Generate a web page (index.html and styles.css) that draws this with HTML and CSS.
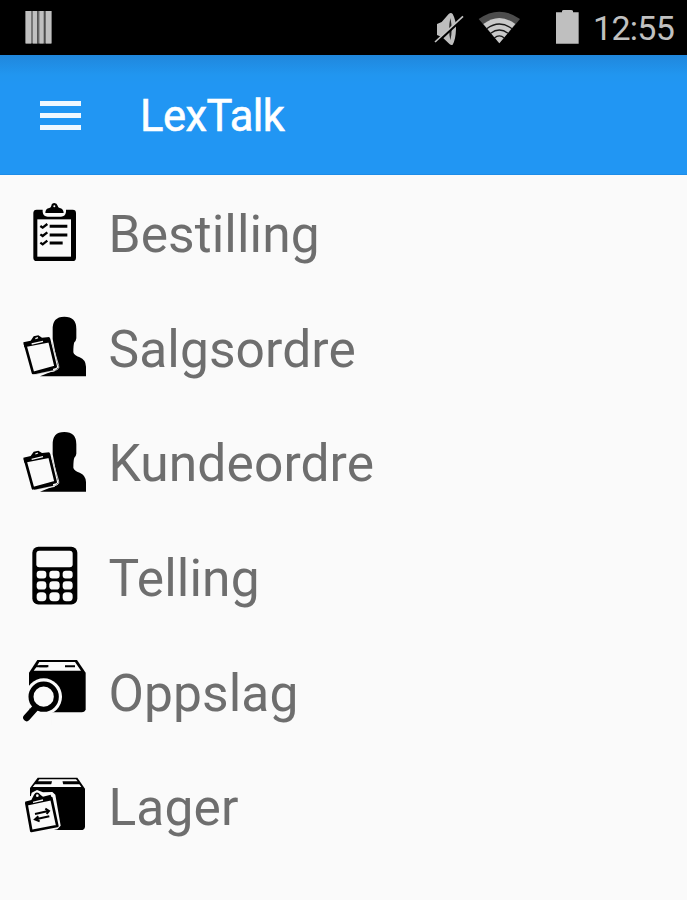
FILE: index.html
```html
<!DOCTYPE html>
<html lang="no">
<head>
<meta charset="utf-8">
<title>LexTalk</title>
<link rel="stylesheet" href="styles.css">
</head>
<body>
<div class="statusbar">
  <svg class="bars" viewBox="0 0 28 34"><rect x="0" y="0" width="27" height="32.500" fill="#777"/><path d="M1 0h5v32.500H1zM8 0h4v32.500H8zM14.500 0h4v32.500h-4zM21 0h5v32.500h-5z" fill="#c0c0c0"/><path d="M12.800 0v32M19.700 0v32" stroke="#444"/></svg>
  <div class="status-right">
    <svg class="tray" viewBox="0 0 525 180">
      <path d="M51 72L65 66 86 42Q93 36 98 42Q109 62 108 87Q107 119 98 134Q92 137 86 130L67 112 51 105Z" fill="#bebebe"/>
      <path d="M91 54Q84 88 91 121Q99 88 91 54Z" fill="#222"/>
      <path d="M48 130L132 52" stroke="#000" stroke-width="8"/>
      <path d="M45 126L129 49" stroke="#c4c4c4" stroke-width="5"/>
      <path d="M176 57Q238 13 300 57L238 130Z" fill="#4c4c4c"/>
      <path d="M190 72Q238 36 286 72L238 130Z" fill="#c9c9c9"/>
      <path d="M200 86Q238 58 276 86M212 100Q238 80 264 100M223 114Q238 101 253 114" fill="none" stroke="#171717" stroke-width="4"/>
      <path d="M408 37H426V33Q427 30 431 30H453Q458 30 459 33V37H476V131H408Z" fill="#bfbfbf"/>
    </svg>
    <span class="clock">12:55</span>
  </div>
</div>
<header class="appbar">
  <div class="menu"><i></i><i></i><i></i></div>
  <h1>LexTalk</h1>
</header>
<svg class="defs" width="0" height="0">
  <defs>
    <g id="customer">
      <path d="M113 61Q111 21 148 21Q184 21 184 58V86Q183 94 178 98Q175 105 175 128Q177 137 194 143Q212 150 213 171V200H75L112 185 125 150 113 88Z"/>
      <path d="M25 102L101 83 107 92 128 172 117 184 54 194Z" fill="#fafafa" stroke="#fafafa" stroke-width="4"/>
      <path d="M30 103L102 88 122 171 54 190Z" fill="#fafafa" stroke="#000" stroke-width="8" stroke-linejoin="round"/>
      <path d="M25 98L47 93 56 80 70 77 81 84 103 82 106 98 28 113Z"/>
      <path d="M50 103L84 95M61 87L69 84" stroke="#fafafa" stroke-width="4"/>
      <path d="M61 194L126 180Q134 176 131 168L110 97" fill="none" stroke="#ccc" stroke-width="3"/>
      <path d="M57 191L114 179" stroke="#000" stroke-width="6"/>
    </g>
  </defs>
</svg>
<ul class="list">
  <li><svg viewBox="0 -1 240 240">
    <rect x="55" y="43" width="128" height="154" rx="10"/>
    <rect x="67" y="72" width="101" height="112" fill="#fafafa"/>
    <path d="M83 40H153V50Q151 64 138 64H98Q85 64 83 50Z" fill="#fafafa"/>
    <path d="M91 53Q91 40 103 38Q108 37 109 31Q110 23 118 23Q126 23 128 31Q129 37 134 38Q145 40 146 53Z"/>
    <circle cx="118" cy="33" r="3" fill="#fafafa"/>
    <path d="M76 92L83 97 97 86M76 117L83 122 97 111M76 142L83 147 97 136" fill="none" stroke="#000" stroke-width="7"/>
    <path d="M104 93H157M104 119H157M104 143H143" stroke="#000" stroke-width="9"/>
  </svg><span>Bestilling</span></li>
  <li><svg viewBox="0 -2 240 240"><use href="#customer"/></svg><span>Salgsordre</span></li>
  <li><svg viewBox="0 -3 240 240"><use href="#customer"/></svg><span>Kundeordre</span></li>
  <li><svg viewBox="0 1.5 240 240">
    <rect x="52" y="28" width="135" height="173" rx="18"/>
    <g fill="#fafafa"><rect x="64" y="40" width="109" height="49" rx="9"/>
    <rect x="65" y="100" width="29" height="23" rx="9"/><rect x="103" y="100" width="31" height="23" rx="9"/><rect x="143" y="100" width="30" height="23" rx="9"/>
    <rect x="65" y="131" width="29" height="25" rx="10"/><rect x="103" y="131" width="31" height="25" rx="10"/><rect x="143" y="131" width="30" height="25" rx="10"/>
    <rect x="65" y="164" width="29" height="27" rx="11"/><rect x="103" y="164" width="31" height="27" rx="11"/><rect x="143" y="164" width="30" height="27" rx="11"/></g>
  </svg><span>Telling</span></li>
  <li><svg viewBox="0 9 240 240">
    <path d="M67 30H186L212 68V178Q210 187 200 187H42V68Z"/>
    <path d="M73 36H180L198 62H56L64 52H96L101 46H67ZM148 46H184L188 54H153Z" fill="#fafafa"/>
    <path d="M101 38H146V59H101Z" fill="#fafafa"/>
    <path d="M73 49H100M150 49H180" stroke="#000" stroke-width="6"/>
    <circle cx="86" cy="140" r="55" fill="#fafafa"/><path d="M22 130H44V187H110V225H22Z" fill="#fafafa"/>
    <circle cx="86" cy="140" r="38" fill="#fafafa" stroke="#000" stroke-width="15"/>
    <path d="M61 174L35 203" stroke="#000" stroke-width="21" stroke-linecap="round"/>
  </svg><span>Oppslag</span></li>
  <li><svg viewBox="0 8 240 240">
    <path d="M68 37H187L210 70V184Q209 194 198 194H119L45 90V68Z"/>
    <path d="M73 42H183L188 48H69ZM60 57H193L199 65H53Z" fill="#fafafa"/><path d="M112 44H142L145 60H108Z" fill="#fafafa"/>
    <path d="M31 102L47 94 50 82 66 74 84 81 112 80 121 88 137 181 127 192 51 207Z" fill="#fafafa"/>
    <path d="M34 114L109 98 127 182 49 197Z" fill="#fafafa" stroke="#000" stroke-width="8" stroke-linejoin="round"/>
    <path d="M30 109L49 104 57 88Q65 75 77 89L84 94 107 88 111 105 34 121Z"/>
    <circle cx="67" cy="91" r="4" fill="#fafafa"/><path d="M54 111L84 104" stroke="#fafafa" stroke-width="4"/>
    <path d="M60 146L100 137M91 130L102 137 95 146M62 162L103 153M70 153L60 162 74 168" fill="none" stroke="#000" stroke-width="6"/>
  </svg><span>Lager</span></li>
</ul>
</body>
</html>
```
FILE: styles.css
```css
* { box-sizing: border-box; }
body { margin: 0; height: 900px; overflow: hidden; background: #fafafa; font-family: Roboto, "Liberation Sans", sans-serif; }
.statusbar { height: 55px; background: #000; display: flex; justify-content: space-between; }
.bars { width: 28px; height: 34px; margin: 11px 0 0 25px; }
.status-right { display: flex; }
.tray { width: 175px; height: 60px; margin-bottom: -5px; }
.clock { width: 94px; color: #c0c0c0; font-size: 34px; line-height: 57px; letter-spacing: -0.7px; white-space: nowrap; margin-left: -2px; }
.appbar { height: 120px; background: linear-gradient(#2087dc 0, #2196f0 20px, #2196f3 30px); border-bottom: 1px solid #1d8ce8; display: flex; align-items: center; }
.menu { width: 41px; height: 29px; margin: 1px 0 0 40px; display: flex; flex-direction: column; justify-content: space-between; }
.menu i { height: 5px; background: #f0f8ff; }
h1 { margin: 4px 0 0 59px; font-size: 43.5px; font-weight: 400; line-height: 60px; color: #fff; letter-spacing: -0.5px; -webkit-text-stroke: 0.6px #fff; }
.defs { display: block; }
.list { list-style: none; margin: 0; padding: 2.4px 0 0 15px; }
.list li { height: 114.6px; display: flex; align-items: center; }
.list svg { width: 80px; height: 80px; flex: none; }
.list span { margin: 1px 0 0 13.5px; font-size: 51.5px; line-height: 60px; color: #6e6e6e; letter-spacing: 0.1px; }
```
